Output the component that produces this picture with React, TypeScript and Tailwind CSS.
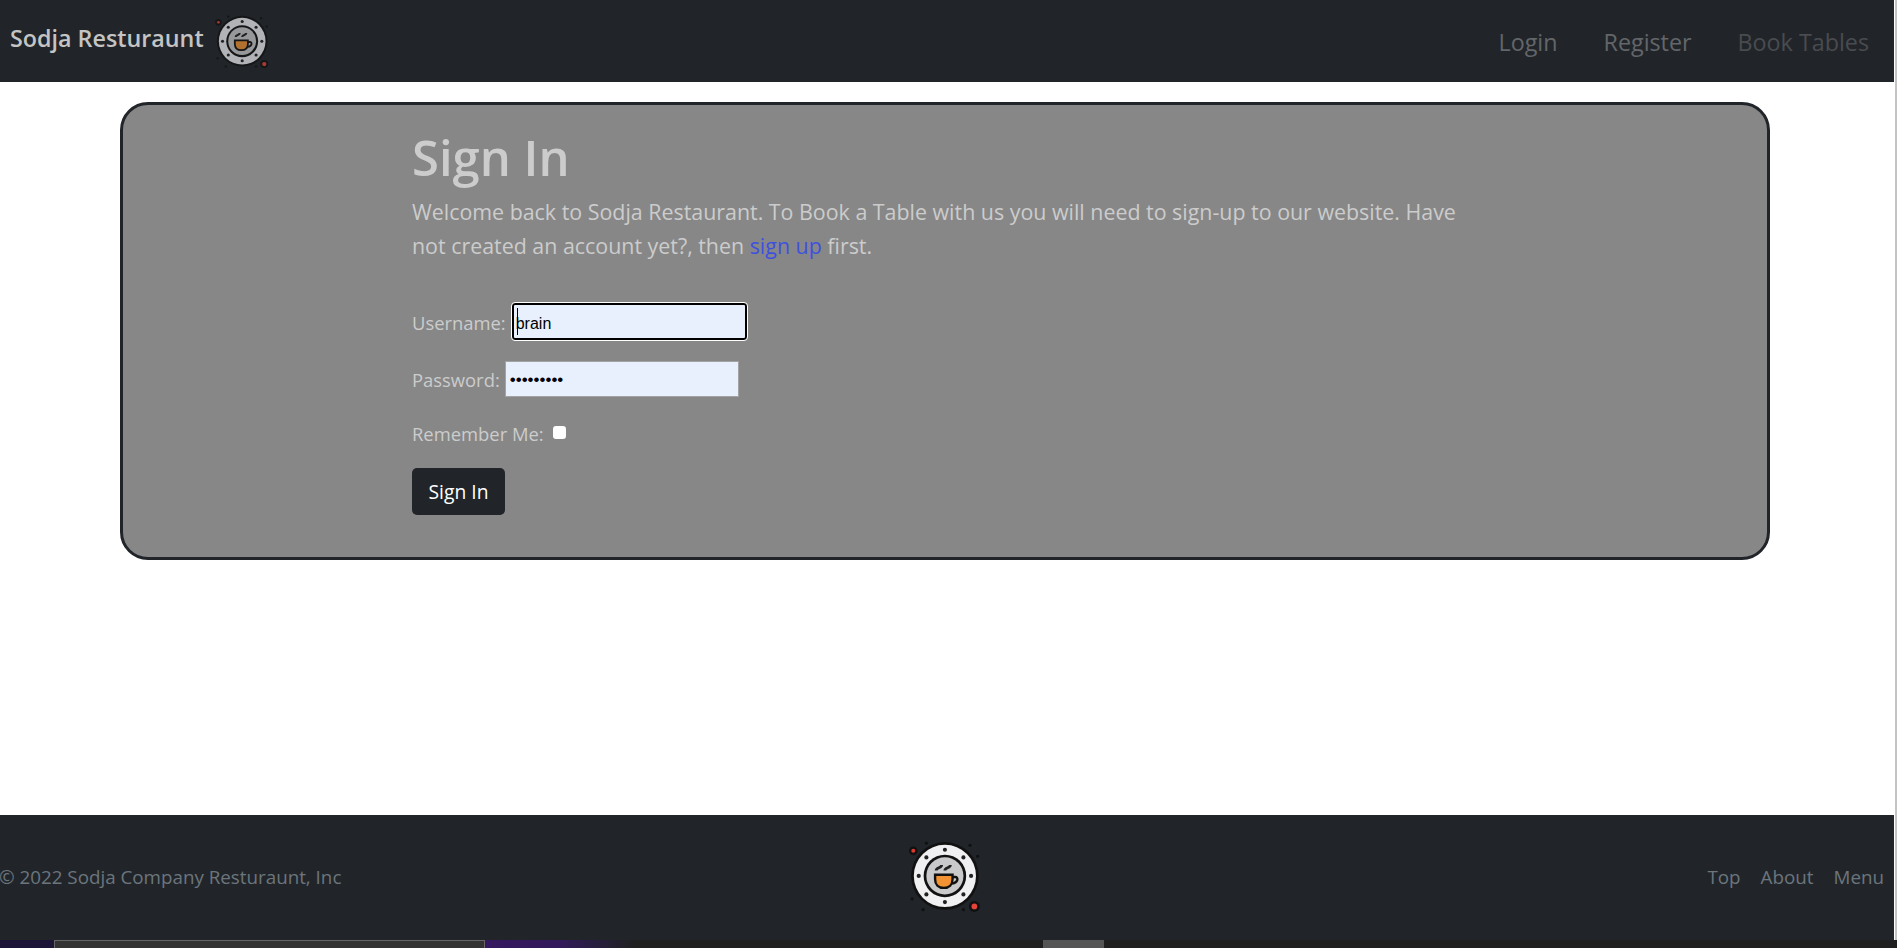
const font = "font-['Open_Sans','Noto_Sans',sans-serif]";

// cup logo, used in the navbar (dimmed) and the footer
function Logo({ className }: { className: string }) {
  const studs = [0, 45, 90, 135, 180, 225, 270, 315];
  const specks = [
    [15, 2],
    [55, 4],
    [62, 14],
    [2, 53],
    [12, 63],
    [49, 63],
  ];
  return (
    <svg viewBox="0 0 66 66" className={`overflow-visible ${className}`}>
      <circle cx="3" cy="9" r="4" fill="#111" />
      <circle cx="3" cy="9" r="1.8" fill="#d9392f" />
      <circle cx="59" cy="60" r="5" fill="#111" />
      <circle cx="59" cy="60" r="2.6" fill="#e5443a" />
      {specks.map(([x, y]) => (
        <circle key={`${x}-${y}`} cx={x} cy={y} r="1.5" fill="#111" />
      ))}
      <circle cx="32" cy="32" r="31" fill="#111" />
      <circle cx="32" cy="32" r="28.5" fill="#f0f0f2" />
      <circle cx="32" cy="32" r="19.5" fill="#111" />
      <circle cx="32" cy="32" r="17" fill="#c9c9cb" />
      {studs.map((a) => (
        <circle
          key={a}
          cx={32 + 24 * Math.cos((a * Math.PI) / 180)}
          cy={32 + 24 * Math.sin((a * Math.PI) / 180)}
          r="1.9"
          fill="#222"
        />
      ))}
      <path d="M23 31h16v4c0 5-3 8-8 8s-8-3-8-8z" fill="#f29233" stroke="#111" strokeWidth="2.2" />
      <path d="M39 33h2.500c3 0 3 5-3 6" fill="none" stroke="#111" strokeWidth="2.2" />
      <path d="M24 27c0-3 5-2 5-5M32 27c0-3 5-2 5-5" fill="none" stroke="#222" strokeWidth="2.6" />
    </svg>
  );
}

function Navbar() {
  return (
    <nav className="h-[82px] bg-[#212529] flex items-center justify-between pl-[10px] pr-[25px]">
      <div className="flex items-center gap-[12px] -mt-[6px]">
        <span className="text-[23.3px] font-semibold text-[#c4c4c4]">Sodja Resturaunt</span>
        <Logo className="w-[54px] h-[54px] opacity-70 mt-[7px]" />
      </div>
      <div className="flex items-center gap-[46px] text-[23.3px] mt-[3px]">
        <a className="text-[#63666a]">Login</a>
        <a className="text-[#63666a]">Register</a>
        <a className="text-[#494b4f]">Book Tables</a>
      </div>
    </nav>
  );
}

function SignInForm() {
  return (
    <section className="ml-[120px] mr-[124px] mt-[20px] h-[458px] bg-[#878787] border-[3px] border-[#212529] rounded-[28px] pl-[289px] text-[#cccccc]">
      <h1 className="text-[49px] font-semibold leading-[56px] mt-[24px]">Sign In</h1>
      <p className="text-[21.4px] leading-[34px] w-[1060px] mt-[10px]">
        Welcome back to Sodja Restaurant. To Book a Table with us you will need to sign-up to our website. Have
        not created an account yet?, then <a className="text-[#3d50e0]">sign up</a> first.
      </p>
      <form className="mt-[39px] flex flex-col items-start text-[18.4px]">
        <div className="flex items-center gap-[6px] h-[39px]">
          <label className="pt-[2px]">Username:</label>
          <div className="relative">
            <input
              readOnly
              value="brain"
              className="block w-[235px] h-[37px] pl-[2px] pt-[4px] bg-[#e8f0fe] border-2 border-black rounded-[3px] outline-1 outline-white text-black text-[16px] font-['Liberation_Sans',sans-serif]"
            />
            <span className="absolute left-[5px] top-[5px] w-px h-[27px] bg-black" />
          </div>
        </div>
        <div className="flex items-center gap-[5px] h-[36px] mt-[20px]">
          <label className="pt-[2px]">Password:</label>
          <input
            readOnly
            type="password"
            value="123456789"
            className="block w-[234px] h-[36px] pl-[4px] pt-[2px] bg-[#e8f0fe] border border-[#a3a3a3] text-black text-[17px] font-['Liberation_Sans',sans-serif]"
          />
        </div>
        <div className="flex items-center gap-[9px] h-[24px] mt-[25px]">
          <label>Remember Me:</label>
          <input type="checkbox" className="w-[13px] h-[13px] -mt-[3px] appearance-none bg-white rounded-[3px]" />
        </div>
        <button
          type="button"
          className="mt-[22px] w-[93px] h-[47px] pt-[2px] bg-[#212529] text-white text-[19.3px] rounded-[5px]"
        >
          Sign In
        </button>
      </form>
    </section>
  );
}

function Footer() {
  return (
    <footer className="h-[125px] bg-[#212529] grid grid-cols-3 items-center text-[18.8px] text-[#6c757d]">
      <span className="-ml-px">© 2022 Sodja Company Resturaunt, Inc</span>
      <Logo className="w-[72px] h-[72px] justify-self-center -mt-[2px] -ml-px" />
      <div className="flex justify-end gap-5 pr-[10px]">
        <a>Top</a>
        <a>About</a>
        <a>Menu</a>
      </div>
    </footer>
  );
}

// strip of the window behind the page, at the very bottom
function BottomStrip() {
  return (
    <div className="h-[8px] flex bg-[#1f1f1f] shrink-0">
      <div className="w-[54px] bg-[#1d1538]" />
      <div className="w-[431px] bg-[#333333] border-t border-x border-[#666666]" />
      <div className="w-[150px] bg-gradient-to-r from-[#35185f] via-[#32195a] to-[#1f1f1f]" />
      <div className="w-[408px]" />
      <div className="w-[61px] bg-[#555555]" />
    </div>
  );
}

export default function App() {
  return (
    <div className={`h-screen flex flex-col overflow-hidden bg-white ${font}`}>
      <div className="flex-1 flex min-h-0">
        <div className="w-[1894px] flex flex-col">
          <Navbar />
          <main className="flex-1">
            <SignInForm />
          </main>
          <Footer />
        </div>
        <div className="flex-1 flex justify-end">
          <div className="w-[2px] bg-[#c4c4c4]" />
        </div>
      </div>
      <BottomStrip />
    </div>
  );
}
